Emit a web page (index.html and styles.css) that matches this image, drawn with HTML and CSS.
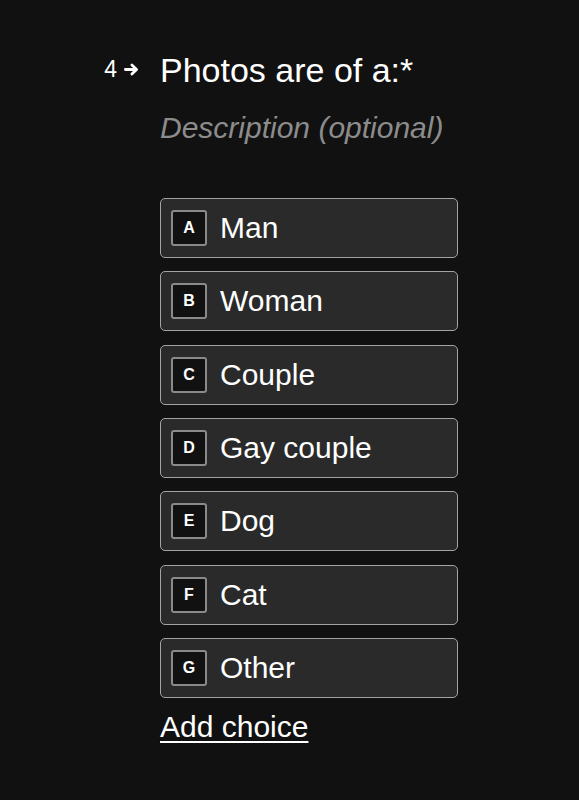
FILE: index.html
```html
<!DOCTYPE html>
<html lang="en">
<head>
<meta charset="utf-8">
<title>Photos are of a</title>
<link rel="stylesheet" href="styles.css">
</head>
<body>
<main class="form">
  <div class="qnum">
    <span class="num">4</span>
    <svg class="arrow" width="15" height="13" viewBox="0 0 15 13" aria-hidden="true">
      <path d="M1.4 6.5 H12.3 M7.9 2 L12.6 6.5 L7.9 11" fill="none" stroke="#fff" stroke-width="2.8" stroke-linecap="round" stroke-linejoin="round"/>
    </svg>
  </div>
  <div class="content">
    <h1 class="title">Photos are of a:*</h1>
    <p class="desc">Description (optional)</p>
    <ul class="choices">
      <li class="choice"><span class="key">A</span><span class="label">Man</span></li>
      <li class="choice"><span class="key">B</span><span class="label">Woman</span></li>
      <li class="choice"><span class="key">C</span><span class="label">Couple</span></li>
      <li class="choice"><span class="key">D</span><span class="label">Gay couple</span></li>
      <li class="choice"><span class="key">E</span><span class="label">Dog</span></li>
      <li class="choice"><span class="key">F</span><span class="label">Cat</span></li>
      <li class="choice"><span class="key">G</span><span class="label">Other</span></li>
    </ul>
    <a class="add" href="#">Add choice</a>
  </div>
</main>
</body>
</html>
```
FILE: styles.css
```css
html, body {
  margin: 0;
  padding: 0;
  background: #111111;
  color: #ffffff;
  font-family: "Liberation Sans", Arial, sans-serif;
}
body {
  min-height: 800px;
}
.form {
  display: grid;
  grid-template-columns: 160px 298px;
  padding-top: 50px;
}
.qnum {
  display: flex;
  justify-content: flex-end;
  align-items: center;
  align-self: start;
  gap: 7px;
  padding-right: 21px;
  margin-top: 7px;
  height: 24px;
}
.num {
  font-size: 23px;
  line-height: 24px;
}
.arrow {
  display: block;
  margin-top: 1px;
}
.content {
  display: flex;
  flex-direction: column;
  align-items: flex-start;
}
.title {
  margin: 0;
  font-size: 34px;
  font-weight: 400;
  line-height: 40px;
}
.desc {
  margin: 20px 0 0;
  font-size: 30px;
  font-style: italic;
  line-height: 36px;
  color: #8c8c8c;
}
.choices {
  list-style: none;
  margin: 52px 0 0;
  padding: 0;
  width: 298px;
  display: flex;
  flex-direction: column;
  gap: 13.33px;
}
.choice {
  box-sizing: border-box;
  height: 60px;
  display: flex;
  align-items: center;
  gap: 13px;
  padding-left: 10px;
  background: #2a2a2a;
  border: 1px solid #a3a3a3;
  border-radius: 5px;
}
.key {
  box-sizing: border-box;
  width: 36px;
  height: 36px;
  display: flex;
  align-items: center;
  justify-content: center;
  background: #111111;
  border: 2px solid #8a8a8a;
  border-radius: 3px;
  font-size: 16px;
  font-weight: 700;
}
.label {
  font-size: 30px;
  line-height: 36px;
}
.add {
  margin-top: 11px;
  font-size: 30px;
  line-height: 36px;
  color: #ffffff;
  text-decoration: underline;
  text-decoration-thickness: 2px;
  text-underline-offset: 4px;
}
```
